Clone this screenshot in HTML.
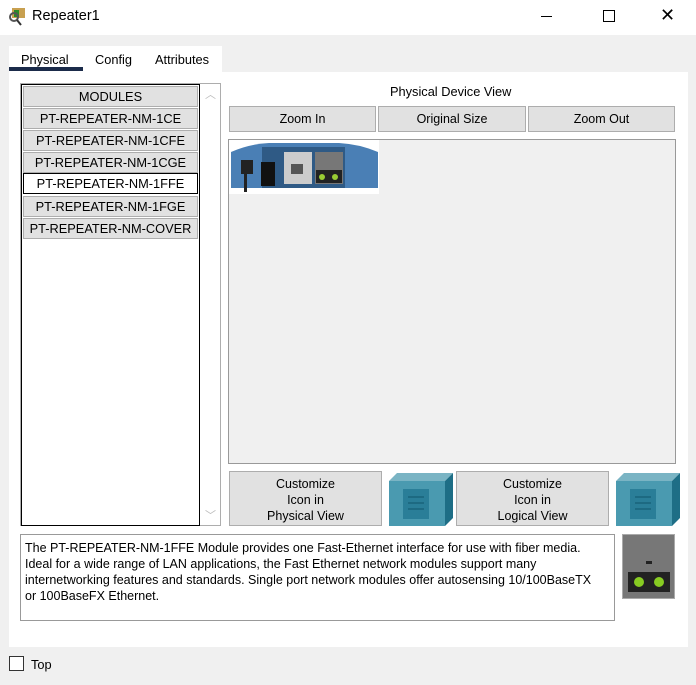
<!DOCTYPE html><html><head><style>
body{margin:0;width:696px;height:685px;background:#f0f0f0;font-family:"Liberation Sans",sans-serif;font-size:12px;color:#000;position:relative;overflow:hidden}
.a{position:absolute}
.btn{position:absolute;background:#e1e1e1;border:1px solid #adadad;box-sizing:border-box;text-align:center;font-size:12.5px}
.it{position:absolute;left:23px;width:175px;height:21px;background:#e1e1e1;border:1px solid #adadad;box-sizing:border-box;text-align:center;line-height:19px;font-size:12.8px}
</style></head><body>
<div class="a" style="left:0;top:0;width:696px;height:35px;background:#fff"></div>
<svg class="a" style="left:7px;top:6px" width="20" height="20"><rect x="5" y="2" width="13" height="10" fill="#c8a050"/><rect x="7" y="4" width="5" height="7" fill="#2a8a2a"/><circle cx="7" cy="11" r="4" fill="none" stroke="#555" stroke-width="2"/><line x1="10" y1="14" x2="14" y2="19" stroke="#333" stroke-width="2"/></svg>
<div class="a" style="left:32px;top:8px;font-size:14.5px">Repeater1</div>
<div class="a" style="left:541px;top:16px;width:11px;height:1px;background:#000"></div>
<div class="a" style="left:603px;top:10px;width:10px;height:10px;border:1px solid #000"></div>
<div class="a" style="left:660px;top:5px;font-size:18px;font-weight:200">✕</div>
<div class="a" style="left:9px;top:46px;width:213px;height:27px;background:#fff"></div>
<div class="a" style="left:9px;top:72px;width:679px;height:575px;background:#fff"></div>
<div class="a" style="left:21px;top:52px;font-size:12.8px">Physical</div>
<div class="a" style="left:95px;top:52px;font-size:12.8px">Config</div>
<div class="a" style="left:155px;top:52px;font-size:12.8px">Attributes</div>
<div class="a" style="left:9px;top:67px;width:74px;height:4px;background:#1b2b4a"></div>
<div class="a" style="left:20px;top:83px;width:201px;height:443px;border:1px solid #adadad;box-sizing:border-box"></div>
<div class="a" style="left:21px;top:84px;width:179px;height:442px;border:1px solid #000;box-sizing:border-box"></div>
<div class="a" style="left:205px;top:86px;color:#bbb;font-size:11px">︿</div>
<div class="a" style="left:205px;top:507px;color:#bbb;font-size:11px">﹀</div>
<div class="it" style="top:86px">MODULES</div>
<div class="it" style="top:108px">PT-REPEATER-NM-1CE</div>
<div class="it" style="top:130px">PT-REPEATER-NM-1CFE</div>
<div class="it" style="top:152px">PT-REPEATER-NM-1CGE</div>
<div class="it" style="top:173px;background:#fff;border:1px solid #000">PT-REPEATER-NM-1FFE</div>
<div class="it" style="top:196px">PT-REPEATER-NM-1FGE</div>
<div class="it" style="top:218px">PT-REPEATER-NM-COVER</div>
<div class="a" style="left:390px;top:84px;font-size:12.8px">Physical Device View</div>
<div class="btn" style="left:229px;top:106px;width:147px;height:26px;line-height:24px">Zoom In</div>
<div class="btn" style="left:378px;top:106px;width:148px;height:26px;line-height:24px">Original Size</div>
<div class="btn" style="left:528px;top:106px;width:147px;height:26px;line-height:24px">Zoom Out</div>
<div class="a" style="left:228px;top:139px;width:448px;height:325px;background:#f0f0f0;border:1px solid #999;box-sizing:border-box"></div>
<svg class="a" style="left:229px;top:140px" width="150" height="54"><rect width="150" height="54" fill="#fff"/><path d="M2 12 Q20 4 40 3 L110 3 Q130 4 149 12 L149 48 L2 48Z" fill="#4a7fb5"/><rect x="33" y="7" width="83" height="41" fill="#2f5a85"/><rect x="12" y="20" width="12" height="14" fill="#222"/><rect x="15" y="32" width="3" height="20" fill="#222"/><rect x="32" y="22" width="14" height="24" fill="#111"/><rect x="55" y="12" width="28" height="32" fill="#ccc"/><rect x="62" y="24" width="12" height="10" fill="#555"/><rect x="86" y="12" width="28" height="32" fill="#777"/><rect x="87" y="30" width="26" height="13" fill="#222"/><circle cx="93" cy="37" r="3" fill="#9c3"/><circle cx="106" cy="37" r="3" fill="#9c3"/></svg>
<div class="btn" style="left:229px;top:471px;width:153px;height:55px;padding-top:4px;line-height:16px">Customize<br>Icon in<br>Physical View</div>
<div class="btn" style="left:456px;top:471px;width:153px;height:55px;padding-top:4px;line-height:16px">Customize<br>Icon in<br>Logical View</div>
<svg class="a" style="left:389px;top:473px" width="64" height="53"><path d="M0 8 L8 0 L64 0 L56 8Z" fill="#7ab4c4"/><path d="M56 8 L64 0 L64 45 L56 53Z" fill="#1e6e86"/><rect x="0" y="8" width="56" height="45" fill="#4a9ab0"/><rect x="14" y="16" width="26" height="30" fill="#2a7e98"/><path d="M19 24h16M19 30h16M19 36h16" stroke="#1d6a82" stroke-width="2"/></svg>
<svg class="a" style="left:616px;top:473px" width="64" height="53"><path d="M0 8 L8 0 L64 0 L56 8Z" fill="#7ab4c4"/><path d="M56 8 L64 0 L64 45 L56 53Z" fill="#1e6e86"/><rect x="0" y="8" width="56" height="45" fill="#4a9ab0"/><rect x="14" y="16" width="26" height="30" fill="#2a7e98"/><path d="M19 24h16M19 30h16M19 36h16" stroke="#1d6a82" stroke-width="2"/></svg>
<div class="a" style="left:20px;top:534px;width:595px;height:87px;border:1px solid #999;box-sizing:border-box;padding:5px 14px 5px 4px;line-height:16px;font-size:12.5px">The PT-REPEATER-NM-1FFE Module provides one Fast-Ethernet interface for use with fiber media. Ideal for a wide range of LAN applications, the Fast Ethernet network modules support many internetworking features and standards. Single port network modules offer autosensing 10/100BaseTX or 100BaseFX Ethernet.</div>
<svg class="a" style="left:622px;top:534px" width="53" height="65"><rect width="53" height="65" fill="#aaa"/><rect x="1" y="1" width="51" height="63" fill="#777"/><rect x="24" y="27" width="6" height="3" fill="#222"/><rect x="6" y="38" width="42" height="20" fill="#222"/><circle cx="17" cy="48" r="5" fill="#8c2"/><circle cx="37" cy="48" r="5" fill="#8c2"/></svg>
<div class="a" style="left:9px;top:656px;width:15px;height:15px;border:1px solid #333;box-sizing:border-box;background:#fff"></div>
<div class="a" style="left:31px;top:657px;font-size:12.8px">Top</div>
</body></html>
